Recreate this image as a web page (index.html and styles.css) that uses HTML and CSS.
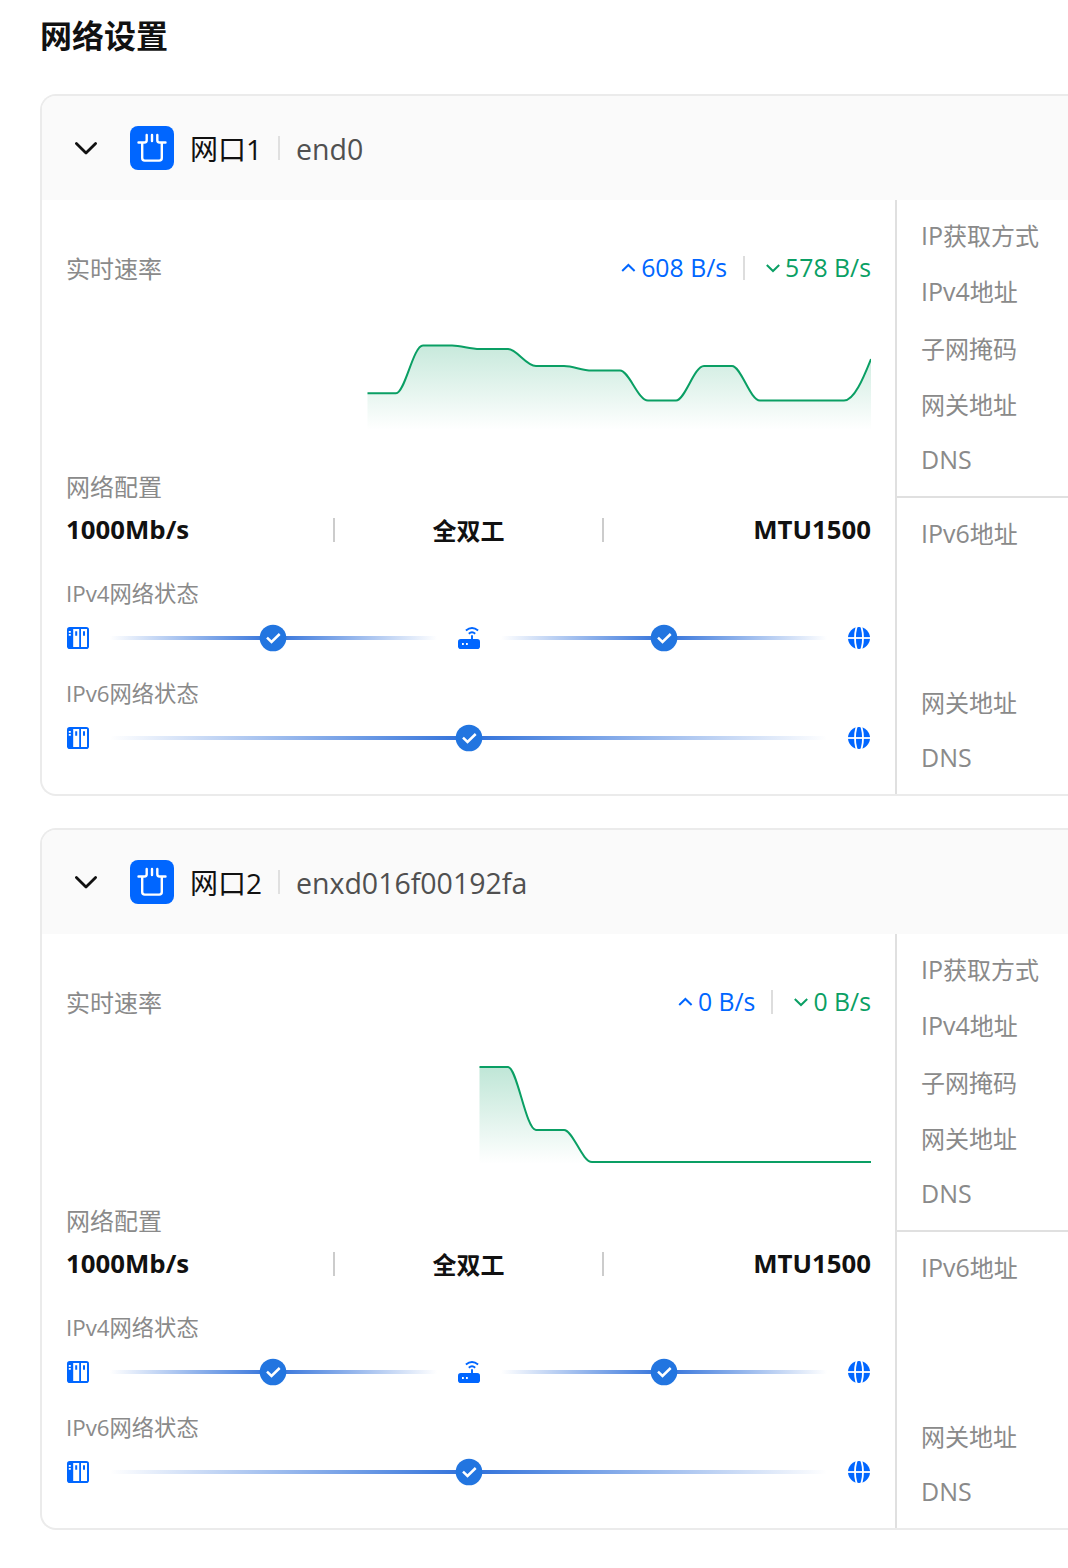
FILE: index.html
```html
<!DOCTYPE html>
<html lang="zh-CN">
<head>
<meta charset="utf-8">
<title>网络设置</title>
<link rel="stylesheet" href="styles.css">
</head>
<body>
<svg class="defs" aria-hidden="true">
  <symbol id="chevron" viewBox="0 0 24 24"><path d="M2.4 7.6 12 17.1l9.6-9.5" fill="none" stroke="currentColor" stroke-width="2.8" stroke-linecap="round" stroke-linejoin="round"/></symbol>
  <symbol id="up" viewBox="0 0 24 24"><path d="m5.2 15 6.2-6 6.2 6" fill="none" stroke="currentColor" stroke-width="2"/></symbol>
  <symbol id="down" viewBox="0 0 24 24"><path d="m5.8 9 6.2 6 6.2-6" fill="none" stroke="currentColor" stroke-width="2"/></symbol>
  <symbol id="port" viewBox="0 0 44 44"><g fill="none" stroke="#fff" stroke-width="2.4" stroke-linecap="round"><path d="M8.5 16.5h6q2.2 0 2.2-2.2V8.9M35.5 16.5h-6q-2.2 0-2.2-2.2V8.9M22 8.9v6.2M12.2 17v15q0 2.6 2.6 2.6h14.4q2.6 0 2.6-2.6V17"/></g></symbol>
  <symbol id="nas" viewBox="0 0 24 24"><rect x="1" y="1" width="22" height="22" rx="2.8" fill="#06f"/><path fill="#fff" d="M7.2 3h6v18h-6zM15 3h6v18h-6zM2.8 5h2v1.8h-2zM2.8 8h2v1.8h-2z"/><path fill="#06f" d="M9.2 5.3h2v4.4h-2zM17 5.3h2v4.4h-2z"/></symbol>
  <symbol id="router" viewBox="0 0 24 24"><rect x="1" y="13" width="22" height="10" rx="2.8" fill="#06f"/><path d="M15 9.3V13M11.8 7.7q3.2-2.9 6.4 0M8.9 4.6q6.1-5 12.2 0" fill="none" stroke="#06f" stroke-width="1.9"/><path fill="#fff" d="M5 17h1.8v2H5zM9 17h1.8v2H9z"/></symbol>
  <symbol id="globe" viewBox="0 0 24 24"><circle cx="12" cy="12" r="11" fill="#06f"/><g fill="none" stroke="#fff" stroke-width="1.8"><ellipse cx="12" cy="12" rx="4" ry="13.5"/><path d="M0 12h24"/></g></symbol>
  <symbol id="check" viewBox="0 0 28 28"><circle cx="14" cy="14" r="13.3" fill="#2275e0"/><path d="m8 13.7 4.5 4.3 8.2-8" fill="none" stroke="#fff" stroke-width="2.5"/></symbol>
  <linearGradient id="fill" gradientUnits="userSpaceOnUse" x1="0" y1="45" x2="0" y2="142"><stop stop-color="#0a9f64" stop-opacity=".26"/><stop offset="1" stop-color="#0a9f64" stop-opacity="0"/></linearGradient>
</svg>

<main class="page">
  <h1 class="title">网络设置</h1>

  <section class="card">
    <header class="head">
      <svg class="icon"><use href="#chevron"/></svg>
      <svg class="port"><use href="#port"/></svg>
      <div class="name"><span class="title-text">网口1</span><i class="sep light"></i><span class="dev">end0</span></div>
    </header>
    <div class="body">
      <div class="left">
        <div class="speed">
          <span class="label">实时速率</span>
          <span class="rate up"><svg class="icon"><use href="#up"/></svg><span>608 B/s</span></span>
          <i class="sep"></i>
          <span class="rate down"><svg class="icon"><use href="#down"/></svg><span>578 B/s</span></span>
        </div>
        <svg class="chart" viewBox="0 0 805 179">
          <path fill="url(#fill)" d="M301.5 105.3H330C339 105.3 347 57.5 357 57.5H386C396 57.5 403 61 414 61H442C451 61 460 78 470 78H498C508 78 515 82.5 526 82.5H554C563 82.5 572 112.5 582 112.5H610C619 112.5 628 78 638 78H666C675 78 684 112.5 694 112.5H778C788 112.5 797 91 805 71V142H301.5Z"/>
          <path class="curve" d="M301.5 105.3H330C339 105.3 347 57.5 357 57.5H386C396 57.5 403 61 414 61H442C451 61 460 78 470 78H498C508 78 515 82.5 526 82.5H554C563 82.5 572 112.5 582 112.5H610C619 112.5 628 78 638 78H666C675 78 684 112.5 694 112.5H778C788 112.5 797 91 805 71"/>
        </svg>
        <div class="label">网络配置</div>
        <div class="values"><b>1000Mb/s</b><b class="cjk">全双工</b><b>MTU1500</b></div>
        <div class="status-label">IPv4网络状态</div>
        <div class="status">
          <svg class="icon"><use href="#nas"/></svg>
          <div class="link"><svg class="badge"><use href="#check"/></svg></div>
          <svg class="icon"><use href="#router"/></svg>
          <div class="link"><svg class="badge"><use href="#check"/></svg></div>
          <svg class="icon"><use href="#globe"/></svg>
        </div>
        <div class="status-label second">IPv6网络状态</div>
        <div class="status">
          <svg class="icon"><use href="#nas"/></svg>
          <div class="link"><svg class="badge"><use href="#check"/></svg></div>
          <svg class="icon"><use href="#globe"/></svg>
        </div>
      </div>
      <div class="right">
        <div class="group"><div class="row mixed"><span class="latin">IP</span>获取方式</div><div class="row mixed"><span class="latin">IPv4</span>地址</div><div class="row">子网掩码</div><div class="row">网关地址</div><div class="row mixed"><span class="latin">DNS</span></div></div>
        <div class="group"><div class="row mixed tall"><span class="latin">IPv6</span>地址</div><div class="row">网关地址</div><div class="row mixed"><span class="latin">DNS</span></div></div>
      </div>
    </div>
  </section>

  <section class="card">
    <header class="head">
      <svg class="icon"><use href="#chevron"/></svg>
      <svg class="port"><use href="#port"/></svg>
      <div class="name"><span class="title-text">网口2</span><i class="sep light"></i><span class="dev">enxd016f00192fa</span></div>
    </header>
    <div class="body">
      <div class="left">
        <div class="speed">
          <span class="label">实时速率</span>
          <span class="rate up"><svg class="icon"><use href="#up"/></svg><span>0 B/s</span></span>
          <i class="sep"></i>
          <span class="rate down"><svg class="icon"><use href="#down"/></svg><span>0 B/s</span></span>
        </div>
        <svg class="chart" viewBox="0 0 805 179">
          <path fill="url(#fill)" d="M413.5 45H442C451 45 460 108 470 108H498C507 108 516 140 526 140V142H413.5Z"/>
          <path class="curve" d="M413.5 45H442C451 45 460 108 470 108H498C507 108 516 140 526 140H805"/>
        </svg>
        <div class="label">网络配置</div>
        <div class="values"><b>1000Mb/s</b><b class="cjk">全双工</b><b>MTU1500</b></div>
        <div class="status-label">IPv4网络状态</div>
        <div class="status">
          <svg class="icon"><use href="#nas"/></svg>
          <div class="link"><svg class="badge"><use href="#check"/></svg></div>
          <svg class="icon"><use href="#router"/></svg>
          <div class="link"><svg class="badge"><use href="#check"/></svg></div>
          <svg class="icon"><use href="#globe"/></svg>
        </div>
        <div class="status-label second">IPv6网络状态</div>
        <div class="status">
          <svg class="icon"><use href="#nas"/></svg>
          <div class="link"><svg class="badge"><use href="#check"/></svg></div>
          <svg class="icon"><use href="#globe"/></svg>
        </div>
      </div>
      <div class="right">
        <div class="group"><div class="row mixed"><span class="latin">IP</span>获取方式</div><div class="row mixed"><span class="latin">IPv4</span>地址</div><div class="row">子网掩码</div><div class="row">网关地址</div><div class="row mixed"><span class="latin">DNS</span></div></div>
        <div class="group"><div class="row mixed tall"><span class="latin">IPv6</span>地址</div><div class="row">网关地址</div><div class="row mixed"><span class="latin">DNS</span></div></div>
      </div>
    </div>
  </section>
</main>
</body>
</html>
```
FILE: styles.css
```css
* { box-sizing: border-box; }
body {
  margin: 0;
  background: #fff;
  color: #111;
  font: 24px/40px "Open Sans", "Noto Sans CJK SC", sans-serif;
}
svg { display: block; flex: none; }
.defs { position: absolute; width: 0; height: 0; }
.page { height: 1568px; padding: 12px 0 0 40px; overflow: hidden; }
.title { margin: 0 0 34px; font-size: 32px; line-height: 48px; font-weight: 700; }

.card {
  height: 702px;
  margin-bottom: 32px;
  border: 2px solid #ebebeb;
  border-right: 0;
  border-radius: 16px 0 0 16px;
  overflow: hidden;
}
.head { display: flex; align-items: center; height: 104px; padding-left: 32px; background: #fafafa; }
.icon { width: 24px; height: 24px; }
.port { width: 44px; height: 44px; margin: 0 16px 0 32px; border-radius: 8px; background: #06f; }
.name { display: flex; align-items: center; gap: 16px; font-size: 28px; }
.title-text { padding-top: 1px; }
.dev { padding-top: 1px; color: #505050; font-size: 28.5px; }
.sep { width: 2px; height: 24px; background: #ddd; }
.sep.light { background: #e0e0e0; }

.body { display: flex; height: 594px; }
.left { width: 853px; padding: 48px 24px 0; }
.label { color: #8a8a8a; }
.speed { display: flex; align-items: center; height: 40px; }
.speed .label { margin-right: auto; padding-top: 2px; }
.speed .sep { margin: 0 16px; }
.rate { display: flex; align-items: center; font-size: 24.8px; }
.rate span { padding-bottom: 2px; }
.rate.up { color: #06f; }
.rate.down { color: #0a9f64; }
.chart { width: 805px; height: 179px; }
.curve { fill: none; stroke: #0a9f64; stroke-width: 2; }

.values { display: grid; grid-template-columns: 267px 269px 269px; margin-top: 11px; }
.values b { height: 24px; line-height: 22px; font-size: 25.8px; text-align: center; }
.values .cjk { font-size: 24px; line-height: 26px; }
.values b:first-child { text-align: left; }
.values b:last-child { text-align: right; }
.values b + b { border-left: 2px solid #ccc; }

.status-label { margin-top: 36px; font-size: 22.3px; line-height: 32px; color: #8a8a8a; }
.status-label.second { margin-top: 24px; }
.status { display: flex; align-items: center; gap: 20px; height: 32px; margin-top: 12px; }
.link {
  display: flex;
  flex: 1;
  align-items: center;
  justify-content: center;
  height: 4px;
  background: linear-gradient(90deg, rgba(47, 112, 218, 0), #2f70da 50%, rgba(47, 112, 218, 0));
}
.badge { width: 28px; height: 28px; }

.right { flex: 1; border-left: 2px solid #e0e0e0; color: #8a8a8a; }
.group { padding: 8px 0 8px 24px; }
.group + .group { border-top: 2px solid #e0e0e0; }
.row { height: 56px; line-height: 57px; white-space: nowrap; }
.row.mixed { line-height: 55px; }
.row.tall { height: 168px; }
.latin { font-size: 25px; }
```
